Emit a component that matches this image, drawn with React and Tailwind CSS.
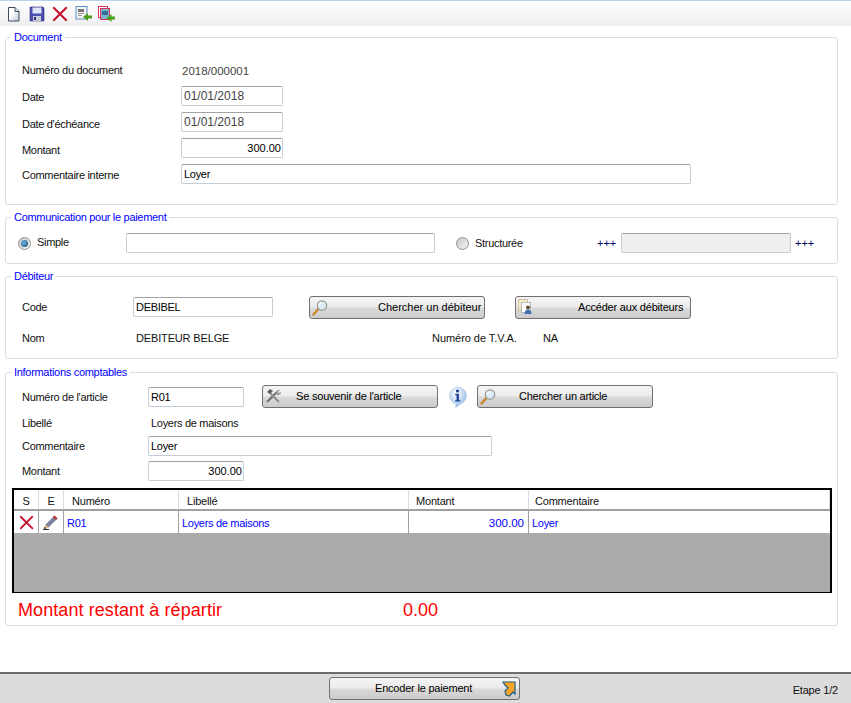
const inputBase =
  "h-5 rounded-[2px] border border-[#c5ced6] border-t-[#a3a3a3] pl-[2px] pr-[1px] text-[11px] leading-[19px]";

function GroupBox({ title, className, children }) {
  return (
    <section className={`relative mx-[5px] w-[833px] rounded-[3px] border border-[#d5dfe5] ${className}`}>
      <span className="absolute left-[5px] top-[-8px] bg-white px-[3px] text-[11px] leading-[14px] tracking-[-0.3px] text-[#0000ff]">
        {title}
      </span>
      {children}
    </section>
  );
}

function Label({ className = "", children }) {
  return <span className={`text-[11px] leading-5 tracking-[-0.3px] text-[#111] ${className}`}>{children}</span>;
}

function Field({ value, className = "" }) {
  return <div className={`${inputBase} ${className}`}>{value}</div>;
}

function Button({ icon, className = "", children }) {
  return (
    <button className={`relative flex h-[23px] items-center rounded-[3px] border border-[#707070] bg-[linear-gradient(#f4f4f4_0%,#ebebeb_48%,#dadada_52%,#cbcbcb_100%)] text-[11px] text-black ${className}`}>
      {icon && <span className="absolute left-[2px] top-[2px]">{icon}</span>}
      {children}
    </button>
  );
}

function Radio({ checked }) {
  return (
    <span className="flex h-[13px] w-[13px] items-center justify-center rounded-full border border-[#8e8f8f] bg-[linear-gradient(135deg,#c8c8c8,#f4f4f4)]">
      {checked && <span className="h-[7px] w-[7px] rounded-full bg-[radial-gradient(circle_at_40%_40%,#6fb8e4,#0b4070)]" />}
    </span>
  );
}

function NewDocIcon() {
  return (
    <svg width="16" height="16" viewBox="0 0 16 16">
      <defs>
        <linearGradient id="docFill" x1="0" y1="0" x2="1" y2="1">
          <stop offset="40%" stopColor="#ffffff" />
          <stop offset="100%" stopColor="#b9c6da" />
        </linearGradient>
      </defs>
      <path d="M2.500 1.500h6.500l4 4v9.500H2.500z" fill="url(#docFill)" stroke="#3e4a5c" />
      <path d="M9 1.500v4h4" fill="#dfe6ee" stroke="#3e4a5c" />
    </svg>
  );
}

function SaveIcon() {
  return (
    <svg width="16" height="16" viewBox="0 0 16 16">
      <path d="M1 1h13l1 1v13H1z" fill="#4a4fb0" stroke="#2a2f7a" strokeWidth="0.600" />
      <rect x="3.500" y="1.500" width="9" height="6" fill="#dfe4f6" />
      <rect x="4" y="10" width="8" height="5" fill="#c8ccd8" />
      <rect x="5" y="11" width="2" height="3" fill="#2a2f7a" />
    </svg>
  );
}

function RedCross({ size = 16 }) {
  return (
    <svg width={size} height={size} viewBox="0 0 16 16">
      <path d="M2 2 14 14M14 2 2 14" stroke="#c8102e" strokeWidth="2" strokeLinecap="square" />
    </svg>
  );
}

function ExportDocIcon() {
  return (
    <svg width="18" height="16" viewBox="0 0 18 16">
      <rect x="1" y="0.500" width="11" height="12.500" fill="#f4f4f4" stroke="#5f8fc8" />
      <rect x="3" y="3" width="6" height="3" fill="#777" />
      <path d="M3 7.500h6M3 9.500h4" stroke="#999" />
      <path d="M17 9.500h-4V7l-5 4 5 4v-2.500h4z" fill="#4a9f1f" />
    </svg>
  );
}

function ExportAllIcon() {
  return (
    <svg width="18" height="16" viewBox="0 0 18 16" className="-ml-[2px]">
      <rect x="0.500" y="0.500" width="9" height="11" fill="#fff" stroke="#d9325a" />
      <rect x="2.500" y="2.500" width="9" height="11" fill="#7fb3cf" stroke="#d9325a" />
      <rect x="4" y="5" width="6" height="4" fill="#2f6f8f" />
      <path d="M17 10.500h-3.500V8l-5 4 5 4v-2.500H17z" fill="#4a9f1f" />
    </svg>
  );
}

function SearchIcon() {
  return (
    <svg width="17" height="17" viewBox="0 0 17 17">
      <path d="M1.500 15.500 6 10.500" stroke="#c9852a" strokeWidth="2.400" strokeLinecap="round" />
      <circle cx="10" cy="6.500" r="4.700" fill="#dcebf8" stroke="#9a9a90" strokeWidth="1.200" />
      <path d="M7.500 6.500a2.500 2.500 0 0 1 2.500-2.500" fill="none" stroke="#fff" strokeWidth="1.200" />
    </svg>
  );
}

function DebtorsIcon() {
  return (
    <svg width="16" height="16" viewBox="0 0 16 16">
      <rect x="0.500" y="0.500" width="9" height="11" fill="#f7edc4" stroke="#c8c0a0" />
      <rect x="3.500" y="3.500" width="9" height="10" fill="#fff" stroke="#b0b8c0" />
      <circle cx="10" cy="8.500" r="2" fill="#6a4a30" />
      <path d="M6.500 15c0-3 1.500-4.500 3.500-4.500s3.500 1.500 3.500 4.500z" fill="#3f6fb0" />
    </svg>
  );
}

function ToolsIcon() {
  return (
    <svg width="18" height="16" viewBox="0 0 18 16">
      <path d="M2 14 12 4" stroke="#6d6d6d" strokeWidth="2" />
      <path d="M14 14 5 5" stroke="#8d8d8d" strokeWidth="2" />
      <path d="M2 4 5 1 8 3 5 6z" fill="#5d5d5d" />
      <path d="M11 5a3 3 0 0 1 4-3l-2 2 1 1 2-1a3 3 0 0 1-4 3z" fill="#9a9a9a" />
    </svg>
  );
}

function InfoIcon() {
  return (
    <svg width="21" height="22" viewBox="0 0 22 24">
      <defs>
        <radialGradient id="infoBg" cx="40%" cy="30%" r="75%">
          <stop offset="0%" stopColor="#ffffff" />
          <stop offset="100%" stopColor="#8fb8e8" />
        </radialGradient>
      </defs>
      <path d="M11 1a10 9.500 0 0 1 3 18.500L9 23.500l.5-4A10 9.500 0 0 1 11 1z" fill="url(#infoBg)" stroke="#a8c0e0" strokeWidth="0.700" />
      <circle cx="11" cy="5.500" r="1.700" fill="#1a3f8f" />
      <path d="M8.500 8.500h4v7h1.500v1.500H8.500v-1.500H10v-5.500H8.500z" fill="#1a3f8f" />
    </svg>
  );
}

function PencilIcon() {
  return (
    <svg width="16" height="16" viewBox="0 0 16 16">
      <path d="M1 15 2.500 10.500 11.500 1.500 14.500 4.500 5.500 13.500z" fill="#7d82a0" />
      <path d="M11.500 1.500 14.500 4.500 13 6 10 3z" fill="#c0392b" />
      <path d="M1 15 2.500 10.500 5.500 13.500z" fill="#e8c88a" />
      <path d="M1 15 1.800 12.800 3.200 14.200z" fill="#111" />
      <path d="M0 15.500h6" stroke="#333" />
    </svg>
  );
}

function EncodeIcon() {
  return (
    <svg width="14" height="16" viewBox="0 0 14 16">
      <path d="M1 1 13 1V13L11 11 7.500 15 4 14 3 10 6 7 3 4z" fill="#f7a428" stroke="#1f5f7f" strokeWidth="1.200" />
    </svg>
  );
}

const columns = [
  { label: "S", width: "w-[25px]", pad: "text-center" },
  { label: "E", width: "w-[25px]", pad: "text-center" },
  { label: "Numéro", width: "w-[115px]", pad: "pl-2" },
  { label: "Libellé", width: "w-[230px]", pad: "pl-2" },
  { label: "Montant", width: "w-[120px]", pad: "pl-[7px]" },
  { label: "Commentaire", width: "flex-1", pad: "pl-[6px]" },
];

function PaymentTable() {
  return (
    <div className="ml-[6px] mt-[7px] flex h-[105px] w-[820px] flex-col border-2 border-b-[1.500px] border-black bg-[#ababab]">
      <div className="flex h-[21px] border-b-2 border-[#a0a0a0] bg-white">
        {columns.map((col) => (
          <div
            key={col.label}
            className={`${col.width} ${col.pad} border-r border-[#d8dce0] text-[11px] leading-[22px] tracking-[-0.2px] text-[#111]`}
          >
            {col.label}
          </div>
        ))}
      </div>
      <div className="flex h-[22px] bg-white text-[11px] leading-[25px] tracking-[-0.3px] text-[#0000ff]">
        <div className="flex w-[25px] items-center justify-center border-r border-[#a0a0a0]">
          <RedCross size={15} />
        </div>
        <div className="flex w-[25px] items-center justify-center border-r border-[#a0a0a0]">
          <PencilIcon />
        </div>
        <div className="w-[115px] border-r border-[#a0a0a0] pl-[3px]">R01</div>
        <div className="w-[230px] border-r border-[#a0a0a0] pl-[3px]">Loyers de maisons</div>
        <div className="w-[120px] border-r border-[#a0a0a0] pr-1 text-right text-[11.500px] tracking-normal">300.00</div>
        <div className="flex-1 pl-[3px]">Loyer</div>
      </div>
    </div>
  );
}

export default function App() {
  return (
    <div className="flex h-[703px] w-[851px] flex-col overflow-hidden bg-white font-['Liberation_Sans',Arial,sans-serif]">
      <div className="flex h-[26px] items-center gap-[7px] border-t border-[#b5d3ef] bg-[linear-gradient(#ffffff,#efefef)] pl-[6px]">
        <NewDocIcon />
        <SaveIcon />
        <RedCross />
        <ExportDocIcon />
        <ExportAllIcon />
      </div>

      <GroupBox title="Document" className="mt-[11px] h-[168px]">
        <div className="flex flex-col gap-[6px] pl-[16px] pt-[22px]">
          <div className="flex h-5 items-center">
            <Label className="w-[160px]">Numéro du document</Label>
            <span className="translate-y-[2px] text-[11.500px] text-[#444]">2018/000001</span>
          </div>
          <div className="flex items-center">
            <Label className="w-[159px] translate-y-[1px]">Date</Label>
            <Field value="01/01/2018" className="w-[102px] text-[12px] text-[#444]" />
          </div>
          <div className="flex items-center">
            <Label className="w-[159px] translate-y-[2px]">Date d'échéance</Label>
            <Field value="01/01/2018" className="w-[102px] text-[12px] text-[#444]" />
          </div>
          <div className="flex items-center">
            <Label className="w-[159px] translate-y-[2px]">Montant</Label>
            <Field value="300.00" className="w-[102px] border-[#5b9bd5] border-t-[#2f78b8] text-right text-[11.500px] text-black" />
          </div>
          <div className="flex items-center">
            <Label className="w-[159px] translate-y-[1px]">Commentaire interne</Label>
            <Field value="Loyer" className="w-[510px] tracking-[-0.3px] text-black" />
          </div>
        </div>
      </GroupBox>

      <GroupBox title="Communication pour le paiement" className="mt-[12px] h-[47px]">
        <div className="flex items-center pl-[12px] pt-[15px]">
          <Radio checked />
          <Label className="ml-[6px] w-[89px] -translate-y-[1px]">Simple</Label>
          <Field value="" className="w-[309px] bg-white" />
          <span className="ml-[21px]"><Radio /></span>
          <Label className="ml-[6px] w-[122px]">Structurée</Label>
          <span className="w-[24px] text-[11px] leading-none text-[#000060]">+++</span>
          <Field value="" className="w-[170px] border-[#a3a3a3] bg-[#efefef]" />
          <span className="ml-1 text-[11px] leading-none text-[#000060]">+++</span>
        </div>
      </GroupBox>

      <GroupBox title="Débiteur" className="mt-[12px] h-[83px]">
        <div className="flex items-start pl-[16px] pt-[19px]">
          <Label className="mt-px w-[111px]">Code</Label>
          <Field value="DEBIBEL" className="mt-px w-[140px] tracking-[-0.3px] text-black" />
          <Button icon={<SearchIcon />} className="ml-[36px] w-[176px] pl-[68px]">
            Chercher un débiteur
          </Button>
          <Button icon={<DebtorsIcon />} className="ml-[30px] w-[176px] pl-[62px] tracking-[-0.2px]">
            Accéder aux débiteurs
          </Button>
        </div>
        <div className="flex items-center pl-[16px] pt-[9px]">
          <Label className="w-[114px]">Nom</Label>
          <Label className="w-[296px] tracking-[-0.15px]">DEBITEUR BELGE</Label>
          <Label className="w-[111px] tracking-[-0.05px]">Numéro de T.V.A.</Label>
          <Label>NA</Label>
        </div>
      </GroupBox>

      <GroupBox title="Informations comptables" className="mt-[13px] h-[254px]">
        <div className="flex h-[35px] items-start pl-[16px] pt-[12px]">
          <Label className="mt-[2px] w-[126px]">Numéro de l'article</Label>
          <Field value="R01" className="mt-[2px] w-[96px] tracking-[-0.3px] text-black" />
          <Button icon={<ToolsIcon />} className="ml-[18px] w-[176px] pl-[33px] tracking-[-0.2px]">
            Se souvenir de l'article
          </Button>
          <span className="ml-[9px] mt-px h-[22px] w-[30px]"><InfoIcon /></span>
          <Button icon={<SearchIcon />} className="w-[176px] pl-[41px] tracking-[-0.25px]">
            Chercher un article
          </Button>
        </div>
        <div className="flex items-center pl-[16px] pt-[5px]">
          <Label className="w-[129px]">Libellé</Label>
          <Label>Loyers de maisons</Label>
        </div>
        <div className="flex items-center pl-[16px] pt-[3px]">
          <Label className="w-[126px]">Commentaire</Label>
          <Field value="Loyer" className="w-[344px] tracking-[-0.3px] text-black" />
        </div>
        <div className="flex items-center pl-[16px] pt-[5px]">
          <Label className="w-[126px]">Montant</Label>
          <Field value="300.00" className="w-[96px] text-right text-[11.500px] text-black" />
        </div>
        <PaymentTable />
        <div className="flex pl-[12px] pt-[5px] text-[18px] leading-[24px] text-[#ff0000]">
          <span className="w-[385px] tracking-[0.08px]">Montant restant à répartir</span>
          <span>0.00</span>
        </div>
      </GroupBox>

      <div className="mt-auto flex h-[31px] items-center border-t-2 border-[#6e6e6e] bg-[#dcdcdc]">
        <Button className="ml-[329px] w-[191px] justify-between pl-[45px] pr-[3px] tracking-[-0.2px]">
          Encoder le paiement
          <EncodeIcon />
        </Button>
        <span className="ml-auto pr-[13px] pt-[3px] text-[11px] tracking-[-0.2px] text-[#111]">Etape 1/2</span>
      </div>
    </div>
  );
}
